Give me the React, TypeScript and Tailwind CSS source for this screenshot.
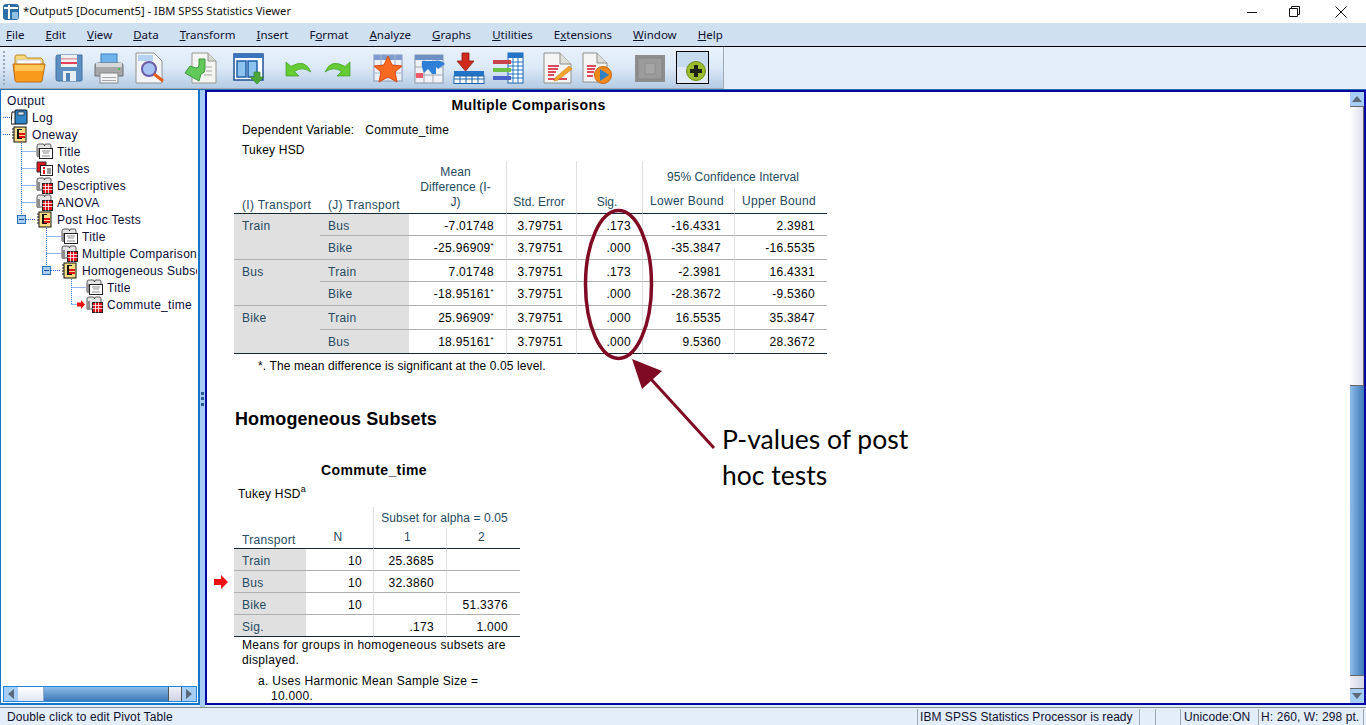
import React from "react";

const menus = [
  ["", "F", "ile"],
  ["", "E", "dit"],
  ["", "V", "iew"],
  ["", "D", "ata"],
  ["", "T", "ransform"],
  ["", "I", "nsert"],
  ["F", "o", "rmat"],
  ["", "A", "nalyze"],
  ["", "G", "raphs"],
  ["", "U", "tilities"],
  ["E", "x", "tensions"],
  ["", "W", "indow"],
  ["", "H", "elp"],
];

// Toolbar icons
function OpenIcon() {
  return (
    <svg width="34" height="32" viewBox="0 0 34 32">
      <path d="M3 8 L3 5 Q3 3 5 3 L13 3 L15 6 L29 6 L31 8 L31 14 L3 14Z" fill="#f6d97a" stroke="#b98a2a" />
      <path d="M5 8 H29 V13 H5Z" fill="#fff" stroke="#c9c9c9" />
      <path d="M1 12 H33 L30 29 Q30 30 28 30 H5 Q3 30 3 28Z" fill="#f99a1c" stroke="#bf6a10" />
      <path d="M3 13 H32 L31 19 H3Z" fill="#fcc659" />
    </svg>
  );
}
function SaveIcon() {
  return (
    <svg width="28" height="32" viewBox="0 0 28 32">
      <path d="M1 5 Q1 3 3 3 H27 V28 Q27 29 25 29 H3 Q1 29 1 27Z" fill="#5d8fc0" stroke="#40709f" />
      <rect x="6" y="3" width="16" height="12" fill="#f1f1f1" />
      <rect x="6" y="6" width="16" height="1.5" fill="#e0a0a8" />
      <rect x="6" y="10" width="16" height="2" fill="#e4405a" />
      <rect x="8" y="19" width="13" height="10" fill="#e9eef3" />
      <rect x="11" y="21" width="4" height="8" fill="#4f83b6" />
    </svg>
  );
}
function PrintIcon() {
  return (
    <svg width="30" height="32" viewBox="0 0 30 32">
      <rect x="7" y="2" width="16" height="11" fill="#6fb4ec" stroke="#3b7fbd" />
      <path d="M1 13 Q1 11 4 11 H26 Q29 11 29 13 V24 H1Z" fill="#a6a8aa" stroke="#6a6c6e" />
      <rect x="2" y="11" width="26" height="4" fill="#d6d8da" />
      <rect x="24" y="16" width="2" height="2" fill="#3fbf56" />
      <rect x="6" y="21" width="18" height="10" fill="#f2f3f4" stroke="#85888a" />
      <rect x="8" y="25" width="14" height="1" fill="#a5a7a9" />
      <rect x="8" y="28" width="14" height="1" fill="#a5a7a9" />
    </svg>
  );
}
function PreviewIcon() {
  return (
    <svg width="32" height="32" viewBox="0 0 32 32">
      <path d="M1 1 H19 L27 9 V31 H1Z" fill="#f3f4f5" stroke="#8f9092" />
      <rect x="3" y="3" width="15" height="6" fill="#b5d3f0" />
      <circle cx="14" cy="17" r="7" fill="#a7c4f0" stroke="#6c5ca8" strokeWidth="2" />
      <path d="M19 22 L28 29" stroke="#e2601c" strokeWidth="3" />
    </svg>
  );
}
function RecallIcon() {
  return (
    <svg width="34" height="32" viewBox="0 0 34 32">
      <path d="M8 1 H24 L32 9 V31 H8Z" fill="#f4f4f2" stroke="#96968f" />
      <path d="M24 1 V9 H32" fill="#d9d9d2" stroke="#96968f" />
      <path d="M22 15 H28 M22 19 H28 M20 23 H28" stroke="#a8a8a2" />
      <path d="M15 7 H21 V17 Q21 21 17 22 L15 29 L1 21 L6 14 L12 16 Q15 16 15 13Z" fill="#62c85a" stroke="#3a9a3c" />
    </svg>
  );
}
function PivotIcon() {
  return (
    <svg width="32" height="32" viewBox="0 0 32 32">
      <rect x="1" y="2" width="29" height="26" fill="#fff" stroke="#1f4f95" strokeWidth="1.5" />
      <rect x="1" y="2" width="29" height="4" fill="#3a74bc" />
      <rect x="4" y="9" width="9" height="16" fill="#8ec3ef" stroke="#1f5fa8" strokeWidth="1.5" />
      <rect x="15" y="9" width="9" height="16" fill="#8ec3ef" stroke="#1f5fa8" strokeWidth="1.5" />
      <path d="M21 20 H27 V25 H31 L24 32 L17 25 H21Z" fill="#4da83c" stroke="#2e7a26" strokeWidth=".6" />
    </svg>
  );
}
function UndoIcon({ flip }: { flip?: boolean }) {
  return (
    <svg width="28" height="32" viewBox="0 0 28 32">
      <g transform={flip ? "translate(28 0) scale(-1 1)" : undefined}>
        <path d="M2 10 V24 H15 L10.5 19.5 Q18 14 27 20 Q21 6 7 14.5Z" fill="#66cc33" stroke="#3d9c2a" strokeWidth=".7" />
      </g>
    </svg>
  );
}
function StarIcon() {
  return (
    <svg width="32" height="32" viewBox="0 0 32 32">
      <rect x="2" y="3" width="28" height="26" fill="#eef1f6" stroke="#8898b8" />
      <rect x="2" y="3" width="28" height="5" fill="#7d9bd0" />
      <path d="M2 14 H30 M2 21 H30 M9 3 V29 M16 3 V29 M23 3 V29" stroke="#a8b4c8" />
      <path d="M16 4 L20 13 L30 14 L23 20 L25 30 L16 25 L7 30 L9 20 L2 14 L12 13Z" fill="#f86a22" stroke="#d9480f" />
    </svg>
  );
}
function GotoIcon() {
  return (
    <svg width="32" height="32" viewBox="0 0 32 32">
      <rect x="1" y="3" width="28" height="28" fill="#f0f2f5" stroke="#8a96a8" />
      <rect x="1" y="3" width="28" height="5" fill="#6d8fc4" />
      <path d="M1 15 H29 M1 23 H29 M10 8 V31 M19 8 V31" stroke="#a0a8b5" />
      <rect x="2" y="21" width="7" height="5" fill="#ef5a6a" />
      <path d="M8 9 H22 V22 H18 L14 17 L10 21 Q7 14 8 9Z" fill="#2f7fd6" />
      <path d="M16 10 Q26 6 31 12 L24 17 Q21 13 16 14Z" fill="#2f7fd6" />
    </svg>
  );
}
function InsertIcon() {
  return (
    <svg width="32" height="32" viewBox="0 0 32 32">
      <path d="M9 1 H16 V9 H21 L12.5 19 L4 9 H9Z" fill="#d02a1c" stroke="#8d150d" strokeWidth=".8" />
      <rect x="1" y="19" width="30" height="5" fill="#2374c6" />
      <rect x="1" y="24" width="30" height="7.5" fill="#fff" stroke="#1d62ac" />
      <path d="M1 27 H31 M7 24 V32 M13 24 V32 M19 24 V32 M25 24 V32" stroke="#1d62ac" />
    </svg>
  );
}
function VarsIcon() {
  return (
    <svg width="32" height="32" viewBox="0 0 32 32">
      <rect x="16" y="1" width="15" height="30" fill="#fff" stroke="#1d62ac" />
      <rect x="16" y="1" width="15" height="5" fill="#2374c6" />
      <path d="M16 10 H31 M16 14 H31 M16 18 H31 M16 22 H31 M16 26 H31 M21 6 V31 M26 6 V31" stroke="#2374c6" />
      <rect x="1" y="8" width="18" height="4" fill="#c9434a" />
      <rect x="1" y="16" width="18" height="4" fill="#6cc04a" />
      <rect x="1" y="24" width="18" height="4" fill="#4a63c9" />
    </svg>
  );
}
function DocIcon() {
  return (
    <svg width="30" height="32" viewBox="0 0 30 32">
      <path d="M1 1 H17 L28 12 V31 H1Z" fill="#f5f5f3" stroke="#8f8f8a" />
      <path d="M17 1 V12 H28" fill="#dedfda" stroke="#8f8f8a" />
      <path d="M5 14 H16 M5 17 H15 M5 20 H13 M5 23 H11 M5 27 H24" stroke="#d6112b" strokeWidth="1.6" />
      <path d="M12 26 L26 14 L29 17 L15 28 L11 29Z" fill="#f4a52a" stroke="#c9781a" strokeWidth=".6" />
    </svg>
  );
}
function ScriptIcon() {
  return (
    <svg width="32" height="32" viewBox="0 0 32 32">
      <path d="M1 1 H15 L25 11 V30 H1Z" fill="#f5f5f3" stroke="#8f8f8a" />
      <path d="M15 1 V11 H25" fill="#dedfda" stroke="#8f8f8a" />
      <path d="M5 14 H14 M5 17 H13 M5 20 H12 M5 24 H11" stroke="#d6112b" strokeWidth="1.6" />
      <circle cx="21" cy="23" r="8.5" fill="#f08a1d" stroke="#c9640f" />
      <path d="M18 17 L27 23 L18 29Z" fill="#2f7fc4" />
    </svg>
  );
}
function GreyIcon() {
  return (
    <svg width="32" height="32" viewBox="0 0 32 32">
      <rect x="1" y="3" width="30" height="27" fill="#8e8e8e" />
      <rect x="4" y="6" width="24" height="21" fill="#9b9b9b" stroke="#858585" />
      <path d="M11 11 H21 V22 H11Z" fill="#a4a4a4" stroke="#8e8e8e" />
    </svg>
  );
}
function DesignateIcon() {
  return (
    <svg width="33" height="33" viewBox="0 0 33 33">
      <rect x=".5" y=".5" width="32" height="32" fill="#dfeaf6" stroke="#000" />
      <rect x="1" y="1" width="31" height="15" fill="#c7dbef" />
      <circle cx="20" cy="20" r="9.5" fill="#9dbb2e" stroke="#6f8c1a" />
      <path d="M18 14 H22 V18 H26 V22 H22 V26 H18 V22 H14 V18 H18Z" fill="#1c2410" />
    </svg>
  );
}

// Tree icons
function BookBase() {
  return (
    <>
      <path d="M1 13 V3 Q1 1 3 1 H7 Q8.5 1 8.5 3 Q8.5 1 10 1 H14 Q15 1 15 3 V13Z" fill="#e4e4e4" stroke="#333" strokeWidth=".8" />
      <rect x="1" y="5" width="3" height="9" fill="#8d8d8d" />
    </>
  );
}
function LogIcon() {
  return (
    <svg width="17" height="17" viewBox="0 0 17 17">
      <path d="M1 3 H5 V15 H0Z" fill="#fff" stroke="#111" />
      <rect x="4" y="1" width="12" height="14" rx="1" fill="#2f86c8" stroke="#111" />
      <rect x="7" y="3" width="6" height="3" fill="#d9ecf8" stroke="#111" strokeWidth=".6" />
    </svg>
  );
}
function SectionIcon() {
  return (
    <svg width="17" height="17" viewBox="0 0 17 17">
      <rect x="3" y="1" width="12" height="15" fill="#f9dd86" stroke="#111" />
      <path d="M3 3 H1 M3 6 H1 M3 9 H1 M3 12 H1" stroke="#111" />
      <rect x="6" y="3" width="2" height="10" fill="#111" />
      <path d="M6 3.5 H11 M6 12.5 H11" stroke="#111" />
      <rect x="8" y="7" width="6" height="2" fill="#e0101a" />
      <rect x="8" y="10" width="6" height="2" fill="#e0101a" />
    </svg>
  );
}
function TitleIcon() {
  return (
    <svg width="17" height="17" viewBox="0 0 17 17">
      <BookBase />
      <rect x="3.5" y="5.5" width="13" height="10" fill="#fff" stroke="#222" />
      <path d="M6 8 H14 M7 10 H13 M6 13 H14" stroke="#8a8a8a" />
    </svg>
  );
}
function NotesIcon() {
  return (
    <svg width="17" height="17" viewBox="0 0 17 17">
      <path d="M1 2 H10 V12 H1Z" fill="#e3101c" stroke="#333" />
      <rect x="4.5" y="5.5" width="12" height="10" fill="#fff" stroke="#222" />
      <rect x="7" y="7" width="2" height="2" fill="#e0101a" />
      <rect x="7" y="10" width="2" height="4" fill="#e0101a" />
      <path d="M11 9 H15 M11 11 H15 M11 13 H15" stroke="#333" />
    </svg>
  );
}
function TableIcon() {
  return (
    <svg width="17" height="17" viewBox="0 0 17 17">
      <BookBase />
      <rect x="6.5" y="6.5" width="10" height="10" fill="#e0101a" stroke="#222" />
      <path d="M9.5 6.5 V16.5 M12.5 6.5 V16.5 M6.5 9.5 H16.5 M6.5 12.5 H16.5" stroke="#fff" strokeWidth=".8" />
    </svg>
  );
}

function TreeRow({ icon, label, className }: { icon?: React.ReactNode; label: string; className: string }) {
  return (
    <div className={`flex items-center h-[17px] whitespace-nowrap tracking-[0.3px] ${className}`}>
      {icon}
      <span>{label}</span>
    </div>
  );
}

function MinusBox({ x, y }: { x: number; y: number }) {
  return (
    <g>
      <rect x={x + 0.5} y={y + 0.5} width="8" height="8" fill="#a5cdf5" stroke="#2f6fb5" />
      <path d={`M${x + 2} ${y + 4.5} H${x + 7}`} stroke="#1d4f8f" />
    </g>
  );
}

function Tree() {
  return (
    <div className="relative flex-1 pt-[2px] mr-[1px] overflow-hidden text-[12px] text-[#0b0b36]">
      {/* dotted connectors, the svg origin sits at the pane's inner corner */}
      <svg className="absolute left-0 top-0" width="197" height="240">
        <path
          d="M2 27.5 H10 M2 44.5 H10 M20.5 51 V125 M20.5 61.5 H35 M20.5 78.5 H35 M20.5 95.5 H35 M20.5 112.5 H35 M25 129.5 H35 M45.5 136 V176 M45.5 146.5 H60 M45.5 163.5 H60 M50 180.5 H60 M70.5 187 V214.5 M70.5 197.5 H85 M70.5 214.5 H76"
          stroke="#2a6fe0"
          strokeDasharray="1 1"
          fill="none"
        />
        <MinusBox x={16} y={125} />
        <MinusBox x={41} y={176} />
        <path d="M76 212.5 H80 V210 L84 214.5 L80 219 V216.5 H76Z" fill="#ee1111" />
      </svg>
      <div className="relative">
        <TreeRow label="Output" className="pl-[6px]" />
        <TreeRow icon={<span className="mr-[4px]"><LogIcon /></span>} label="Log" className="pl-[10px]" />
        <TreeRow icon={<span className="mr-[4px]"><SectionIcon /></span>} label="Oneway" className="pl-[10px]" />
        <TreeRow icon={<span className="mr-[4px]"><TitleIcon /></span>} label="Title" className="pl-[35px]" />
        <TreeRow icon={<span className="mr-[4px]"><NotesIcon /></span>} label="Notes" className="pl-[35px]" />
        <TreeRow icon={<span className="mr-[4px]"><TableIcon /></span>} label="Descriptives" className="pl-[35px]" />
        <TreeRow icon={<span className="mr-[4px]"><TableIcon /></span>} label="ANOVA" className="pl-[35px]" />
        <TreeRow icon={<span className="mr-[4px]"><SectionIcon /></span>} label="Post Hoc Tests" className="pl-[35px]" />
        <TreeRow icon={<span className="mr-[4px]"><TitleIcon /></span>} label="Title" className="pl-[60px]" />
        <TreeRow icon={<span className="mr-[4px]"><TableIcon /></span>} label="Multiple Comparisons" className="pl-[60px]" />
        <TreeRow icon={<span className="mr-[4px]"><SectionIcon /></span>} label="Homogeneous Subsets" className="pl-[60px]" />
        <TreeRow icon={<span className="mr-[4px]"><TitleIcon /></span>} label="Title" className="pl-[85px]" />
        <TreeRow icon={<span className="mr-[4px]"><TableIcon /></span>} label="Commute_time" className="pl-[85px]" />
      </div>
    </div>
  );
}

const rows = [
  { i: "Train", j: "Bus", mean: "-7.01748", star: false, sig: ".173", lo: "-16.4331", hi: "2.3981", h: "h-[22px]", pt: "pt-[4px]", end: false },
  { i: "", j: "Bike", mean: "-25.96909", star: true, sig: ".000", lo: "-35.3847", hi: "-16.5535", h: "h-[24px]", pt: "pt-[2px]", end: true },
  { i: "Bus", j: "Train", mean: "7.01748", star: false, sig: ".173", lo: "-2.3981", hi: "16.4331", h: "h-[22px]", pt: "pt-[4px]", end: false },
  { i: "", j: "Bike", mean: "-18.95161", star: true, sig: ".000", lo: "-28.3672", hi: "-9.5360", h: "h-[24px]", pt: "pt-[2px]", end: true },
  { i: "Bike", j: "Train", mean: "25.96909", star: true, sig: ".000", lo: "16.5535", hi: "35.3847", h: "h-[24px]", pt: "pt-[2px]", end: false },
  { i: "", j: "Bus", mean: "18.95161", star: true, sig: ".000", lo: "9.5360", hi: "28.3672", h: "h-[24px]", pt: "pt-[2px]", end: true },
];

function ComparisonsTable() {
  const head = "align-bottom font-normal text-[#264a60]";
  return (
    <table className="table-fixed border-separate border-spacing-0 w-[593px] text-[12px] leading-[15px] tracking-[0.3px]">
      <colgroup>
        <col className="w-[86px]" />
        <col className="w-[89px]" />
        <col className="w-[97px]" />
        <col className="w-[70px]" />
        <col className="w-[66px]" />
        <col className="w-[92px]" />
        <col className="w-[93px]" />
      </colgroup>
      <thead>
        <tr className="h-[27px]">
          <th rowSpan={2} className={`${head} text-left pl-[8px] border-b border-[#152935]`}>(I) Transport</th>
          <th rowSpan={2} className={`${head} text-left pl-[8px] border-b border-[#152935]`}>(J) Transport</th>
          <th rowSpan={2} className={`${head} text-center tracking-[0.1px] pr-[4px] pb-[3px] border-b border-[#152935]`}>
            Mean
            <br />
            Difference (I-
            <br />
            J)
          </th>
          <th rowSpan={2} className={`${head} text-center tracking-normal pr-[5px] pb-[3px] border-b border-l border-[#e0e0e0] border-b-[#152935]`}>Std. Error</th>
          <th rowSpan={2} className={`${head} text-center tracking-normal pr-[5px] pb-[3px] border-b border-l border-[#e0e0e0] border-b-[#152935]`}>Sig.</th>
          <th colSpan={2} className={`${head} text-center tracking-[0.05px] pr-[4px] pb-[3px] border-l border-[#e0e0e0]`}>95% Confidence Interval</th>
        </tr>
        <tr className="h-[26px]">
          <th className={`${head} text-center pr-[3px] pb-[4px] border-b border-l border-[#e0e0e0] border-b-[#152935]`}>Lower Bound</th>
          <th className={`${head} text-center pr-[4px] pb-[4px] border-b border-l border-[#e0e0e0] border-b-[#152935]`}>Upper Bound</th>
        </tr>
      </thead>
      <tbody className="text-[#010205]">
        {rows.map((r, idx) => {
          const line = idx === 5 ? "border-b-[#152935]" : "border-b-[#aeaeae]";
          return (
            <tr key={idx} className={r.h}>
              <td className={`bg-[#e0e0e0] text-[#264a60] pl-[8px] align-top pt-[5px] ${r.end ? `border-b ${line}` : ""}`}>{r.i}</td>
              <td className={`bg-[#e0e0e0] text-[#264a60] pl-[8px] border-b ${r.pt} ${line}`}>{r.j}</td>
              <td className={`text-right pr-[12px] border-b ${r.pt} ${line}`}>
                {r.mean}
                {r.star && <sup className="text-[8px] leading-none">*</sup>}
              </td>
              <td className={`text-right pr-[13px] border-b border-l border-l-[#e0e0e0] ${r.pt} ${line}`}>3.79751</td>
              <td className={`text-right pr-[11px] border-b border-l border-l-[#e0e0e0] ${r.pt} ${line}`}>{r.sig}</td>
              <td className={`text-right pr-[13px] border-b border-l border-l-[#e0e0e0] ${r.pt} ${line}`}>{r.lo}</td>
              <td className={`text-right pr-[12px] border-b border-l border-l-[#e0e0e0] ${r.pt} ${line}`}>{r.hi}</td>
            </tr>
          );
        })}
      </tbody>
    </table>
  );
}

const subsets = [
  { t: "Train", n: "10", a: "25.3685", b: "" },
  { t: "Bus", n: "10", a: "32.3860", b: "" },
  { t: "Bike", n: "10", a: "", b: "51.3376" },
  { t: "Sig.", n: "", a: ".173", b: "1.000" },
];

function SubsetsTable() {
  const head = "align-bottom font-normal text-[#264a60]";
  return (
    <table className="table-fixed border-separate border-spacing-0 w-[286px] text-[12px] leading-[15px] tracking-[0.3px]">
      <colgroup>
        <col className="w-[72px]" />
        <col className="w-[67px]" />
        <col className="w-[73px]" />
        <col className="w-[74px]" />
      </colgroup>
      <thead>
        <tr className="h-[21px]">
          <th rowSpan={2} className={`${head} text-left pl-[8px] border-b border-[#152935]`}>Transport</th>
          <th rowSpan={2} className={`${head} text-center pr-[3px] pb-[3px] border-b border-[#152935]`}>N</th>
          <th colSpan={2} className={`${head} text-center tracking-[0.1px] pr-[5px] pb-[2px] border-l border-[#e0e0e0]`}>Subset for alpha = 0.05</th>
        </tr>
        <tr className="h-[21px]">
          <th className={`${head} text-center pb-[3px] pr-[5px] border-b border-l border-[#e0e0e0] border-b-[#152935]`}>1</th>
          <th className={`${head} text-center pb-[3px] pr-[4px] border-b border-l border-[#e0e0e0] border-b-[#152935]`}>2</th>
        </tr>
      </thead>
      <tbody className="text-[#010205]">
        {subsets.map((r, idx) => {
          const line = idx === 3 ? "border-b-[#152935]" : "border-b-[#aeaeae]";
          return (
            <tr key={r.t} className="h-[22px]">
              <td className={`bg-[#e0e0e0] text-[#264a60] pl-[8px] pt-[4px] border-b ${line}`}>{r.t}</td>
              <td className={`text-right pr-[11px] pt-[4px] border-b ${line}`}>{r.n}</td>
              <td className={`text-right pr-[12px] pt-[4px] border-b border-l border-l-[#e0e0e0] ${line}`}>{r.a}</td>
              <td className={`text-right pr-[12px] pt-[4px] border-b border-l border-l-[#e0e0e0] ${line}`}>{r.b}</td>
            </tr>
          );
        })}
      </tbody>
    </table>
  );
}

function ArrowBtn({ dir }: { dir: "up" | "down" | "left" | "right" }) {
  const pts = {
    up: "7,4 2,10 12,10",
    down: "2,4 12,4 7,10",
    left: "10,2 10,12 4,7",
    right: "4,2 4,12 10,7",
  }[dir];
  return (
    <svg width="14" height="14" viewBox="0 0 14 14" className="shrink-0 bg-[#a6cdf6]">
      <polygon points={pts} fill="#5a6a78" />
    </svg>
  );
}

export default function App() {
  return (
    <div className="relative w-[1366px] h-[725px] overflow-hidden flex flex-col bg-white font-['Liberation_Sans',sans-serif]">
      {/* Title bar */}
      <div className="h-[23px] shrink-0 flex items-center bg-white">
        <svg width="18" height="18" viewBox="0 0 18 18" className="ml-[2px]">
          <path d="M1 4 Q1 1 4 1 H14 Q17 1 17 4 V14 Q17 17 14 17 H4 Q1 17 1 14Z" fill="#2d6ea8" />
          <path d="M2 4 H16 V6 H2Z M6 2 H8 V16 H6Z" fill="#fff" />
          <rect x="10" y="9" width="6" height="7" fill="#8fc0e6" />
        </svg>
        <span className="ml-[3px] text-[11.2px] text-[#111] font-['Noto_Sans',sans-serif]">*Output5 [Document5] - IBM SPSS Statistics Viewer</span>
        <div className="ml-auto flex items-center">
          <svg width="12" height="12" viewBox="0 0 12 12"><path d="M1 6.5 H11" stroke="#111" /></svg>
          <svg width="12" height="12" viewBox="0 0 12 12" className="ml-[31px]">
            <path d="M.5 2.5 H8.5 V10.5 H.5Z M2.5 2.5 V.5 H10.5 V8.5 H8.5" fill="none" stroke="#111" />
          </svg>
          <svg width="12" height="12" viewBox="0 0 12 12" className="ml-[34px] mr-[19px]">
            <path d="M.5 .5 L11.5 11.5 M11.5 .5 L.5 11.5" stroke="#111" />
          </svg>
        </div>
      </div>

      {/* Menu bar */}
      <div className="h-[24px] shrink-0 flex items-center gap-[21px] pl-[6px] bg-[#cfe0f1] border-b border-black text-[11.5px] text-[#101030] font-['Noto_Sans',sans-serif]">
        {menus.map(([pre, key, rest]) => (
          <span key={key + rest}>
            {pre}
            <span className="underline">{key}</span>
            {rest}
          </span>
        ))}
      </div>

      {/* Toolbar */}
      <div className="h-[42px] shrink-0 flex bg-[#e3eefa]">
        <div className="w-[724px] flex items-center bg-gradient-to-b from-[#e9f2fc] via-[#dce9f7] to-[#b4cce4] border-r border-b border-[#a0aab4]">
          <div className="ml-[3px] w-[2px] h-[34px] border-l-2 border-dotted border-[#9aa8b8]" />
          <div className="ml-[7px]"><OpenIcon /></div>
          <div className="ml-[9px]"><SaveIcon /></div>
          <div className="ml-[11px]"><PrintIcon /></div>
          <div className="ml-[11px]"><PreviewIcon /></div>
          <div className="ml-[17px]"><RecallIcon /></div>
          <div className="ml-[15px]"><PivotIcon /></div>
          <div className="ml-[19px]"><UndoIcon /></div>
          <div className="ml-[12px]"><UndoIcon flip /></div>
          <div className="ml-[20px]"><StarIcon /></div>
          <div className="ml-[10px]"><GotoIcon /></div>
          <div className="ml-[7px]"><InsertIcon /></div>
          <div className="ml-[7px]"><VarsIcon /></div>
          <div className="ml-[19px]"><DocIcon /></div>
          <div className="ml-[9px]"><ScriptIcon /></div>
          <div className="ml-[20px]"><GreyIcon /></div>
          <div className="ml-[10px]"><DesignateIcon /></div>
        </div>
      </div>

      {/* Main area */}
      <div className="flex-1 min-h-0 flex border-t border-[#2a6fa8] bg-[#dfecf9]">
        {/* Outline pane */}
        <div className="w-[200px] shrink-0 flex flex-col bg-white border-l border-r-2 border-b-2 border-[#1874c9] mb-[2px]">
          <Tree />
          <div className="h-[16px] ml-[2px] mr-[1px] mb-[1px] flex border border-[#1c86e0]">
            <ArrowBtn dir="left" />
            <div className="w-[26px] bg-gradient-to-b from-white to-[#dfe6f2] border-r border-[#8fa8c8]" />
            <div className="flex-1 bg-gradient-to-b from-[#8dbce8] to-[#3c78b8]" />
            <div className="w-[14px] bg-gradient-to-b from-[#f0f0f8] to-[#cfd3e2] border-x border-[#555]" />
            <ArrowBtn dir="right" />
          </div>
        </div>

        {/* Splitter with grip */}
        <div className="w-[5px] shrink-0 flex items-center justify-center bg-[#a6cdf6]">
          <div className="w-[3px] h-[14px] border-l-[3px] border-dotted border-[#2a5a98]" />
        </div>

        {/* Content pane */}
        <div className="flex-1 min-w-0 flex border-2 border-[#0606a0] mb-[2px] bg-white">
          <div className="flex-1 min-w-0 overflow-hidden pl-[27px] text-[12px] tracking-[0.2px] text-[#010205]">
            <div className="relative">
              <div className="w-[593px] h-[26px] flex items-center justify-center pr-[4px] pt-[1px] text-[14px] font-bold tracking-[0.4px]">Multiple Comparisons</div>
              <div className="h-[20px] mt-[2px] flex items-center pl-[8px]">
                <span>Dependent Variable:</span>
                <span className="ml-[11px]">Commute_time</span>
              </div>
              <div className="h-[20px] flex items-center pl-[8px]">Tukey HSD</div>
              <div className="mt-[1px]"><ComparisonsTable /></div>
              <div className="h-[24px] flex items-center pl-[24px] tracking-[0.12px]">*. The mean difference is significant at the 0.05 level.</div>
              <div className="mt-[29px] h-[24px] flex items-center pl-[1px] text-[18px] font-bold tracking-[0.1px]">Homogeneous Subsets</div>
              <div className="mt-[27px] w-[280px] h-[24px] flex items-center justify-center text-[14px] font-bold tracking-[0.4px]">Commute_time</div>
              <div className="h-[20px] mt-[2px] flex items-center pl-[4px]">
                Tukey HSD<sup className="text-[9px] leading-none">a</sup>
              </div>
              <div className="mt-[3px] relative">
                <SubsetsTable />
                {/* red marker pointing at the selected row */}
                <svg className="absolute left-[-20px] top-[68px]" width="14" height="14" viewBox="0 0 14 14">
                  <path d="M0 4 H7 V0 L14 7 L7 14 V10 H0Z" fill="#ee1111" />
                </svg>
              </div>
              <div className="w-[286px] pl-[8px] mt-[1px] leading-[15px] tracking-[0.3px]">Means for groups in homogeneous subsets are displayed.</div>
              <div className="w-[286px] pl-[37px] -indent-[13px] mt-[6px] leading-[15px] tracking-[0.3px]">a. Uses Harmonic Mean Sample Size = 10.000.</div>
            </div>
          </div>
          {/* Vertical scrollbar */}
          <div className="w-[14px] shrink-0 flex flex-col">
            <ArrowBtn dir="up" />
            <div className="h-[280px] bg-gradient-to-r from-white to-[#dfe0ee] border-y border-r border-[#666]" />
            <div className="flex-1 bg-gradient-to-r from-[#8dbce8] to-[#3c78b8]" />
            <div className="h-[14px] bg-gradient-to-r from-[#f0f0f8] to-[#cfd3e2] border-y border-[#666]" />
            <ArrowBtn dir="down" />
          </div>
        </div>
      </div>

      {/* Status bar */}
      <div className="h-[18px] shrink-0 flex bg-[#e3eefa] border-t border-[#8a8f96] pt-[1px] text-[12px] tracking-[0.1px] text-[#101030] whitespace-nowrap">
        <div className="w-[917px] pl-[7px] flex items-center">Double click to edit Pivot Table</div>
        <div className="w-[223px] pl-[2px] flex items-center border-x border-[#a0a8b0] tracking-[0.05px]">IBM SPSS Statistics Processor is ready</div>
        <div className="w-[16px] border-r border-[#a0a8b0]" />
        <div className="w-[25px] border-r border-[#a0a8b0]" />
        <div className="w-[78px] pl-[3px] flex items-center border-r border-[#a0a8b0]">Unicode:ON</div>
        <div className="w-[105px] pl-[2px] flex items-center border-r border-[#a0a8b0]">H: 260, W: 298 pt.</div>
      </div>

      {/* Annotation drawn over the output */}
      <svg className="absolute left-0 top-0 pointer-events-none" width="1366" height="725">
        <ellipse cx="618.5" cy="284.5" rx="33" ry="74" fill="none" stroke="#7f0a24" strokeWidth="3.5" />
        <path d="M714 448 L650 378" stroke="#7f0a24" strokeWidth="3" />
        <polygon points="632,359 662,371 642,389" fill="#7f0a24" />
      </svg>
      <div className="absolute left-[722px] top-[421px] text-[26.5px] leading-[36px] text-black font-['Lato',sans-serif]">
        P-values of post
        <br />
        hoc tests
      </div>
    </div>
  );
}
